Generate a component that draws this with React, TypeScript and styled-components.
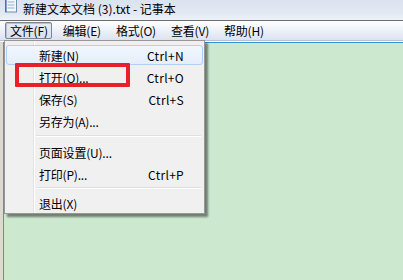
import React from "react";
import { styled, createGlobalStyle } from "styled-components";

const GlobalStyle = createGlobalStyle`
  html, body {
    margin: 0;
    padding: 0;
    overflow: hidden;
  }
  body {
    font-family: "Noto Sans CJK SC", "Noto Sans", sans-serif;
    font-size: 12px;
    color: #000000;
  }
`;

type MenuEntry =
  | { kind: "item"; label: string; shortcut?: string; hot?: boolean }
  | { kind: "sep"; tight?: boolean };

const fileMenu: MenuEntry[] = [
  { kind: "item", label: "新建(N)", shortcut: "Ctrl+N", hot: true },
  { kind: "item", label: "打开(O)...", shortcut: "Ctrl+O" },
  { kind: "item", label: "保存(S)", shortcut: "Ctrl+S" },
  { kind: "item", label: "另存为(A)..." },
  { kind: "sep" },
  { kind: "item", label: "页面设置(U)..." },
  { kind: "item", label: "打印(P)...", shortcut: "Ctrl+P" },
  { kind: "sep", tight: true },
  { kind: "item", label: "退出(X)" },
];

const menuBarItems = ["文件(F)", "编辑(E)", "格式(O)", "查看(V)", "帮助(H)"];

const NotepadIcon = () => (
  <svg width="14" height="14" viewBox="0 0 14 14">
    <rect x="1.5" y="-2" width="11" height="14" fill="#f4f8fc" stroke="#6f8fb0" />
    <line x1="3.5" y1="2" x2="10.5" y2="2" stroke="#8fb0d0" />
    <line x1="3.5" y1="5" x2="10.5" y2="5" stroke="#8fb0d0" />
    <line x1="3.5" y1="8" x2="10.5" y2="8" stroke="#8fb0d0" />
    <rect x="1" y="0" width="1.6" height="12" fill="#3b74b8" />
  </svg>
);

const App = () => {
  return (
    <>
      <GlobalStyle />
      <Window>
        <TitleBar>
          <IconSlot>
            <NotepadIcon />
          </IconSlot>
          <TitleText>新建文本文档 (3).txt - 记事本</TitleText>
        </TitleBar>
        <MenuBar>
          {menuBarItems.map((m, i) => (
            <MenuBarItem key={m} $open={i === 0}>
              {m}
            </MenuBarItem>
          ))}
        </MenuBar>
        <Body>
          <Editor />
        </Body>

        <Dropdown>
          <Gutter />
          {fileMenu.map((e, i) =>
            e.kind === "sep" ? (
              <Separator key={i} $tight={e.tight} />
            ) : (
              <Item key={i} $hot={e.hot}>
                <ItemLabel>{e.label}</ItemLabel>
                <Shortcut>{e.shortcut}</Shortcut>
              </Item>
            )
          )}
        </Dropdown>
        <Callout />
      </Window>
    </>
  );
};
export default App;

const Window = styled.div`
  position: relative;
  width: 403px;
  height: 280px;
  display: flex;
  flex-direction: column;
  overflow: hidden;
  background: #cce8cf;
`;

const TitleBar = styled.div`
  height: 20px;
  display: flex;
  align-items: center;
  background: linear-gradient(#dbe3ef, #e3e9f3 70%, #eef2f8);
  border-bottom: 1px solid #6d6d6d;
`;

const IconSlot = styled.div`
  width: 14px;
  height: 14px;
  margin: -6px 0 0 4px;
  display: flex;
`;

const TitleText = styled.span`
  margin-left: 5px;
  margin-top: -4px;
  font-size: 12px;
  white-space: nowrap;
`;

const MenuBar = styled.div`
  height: 19px;
  display: flex;
  align-items: center;
  padding-left: 5px;
  background: linear-gradient(#ffffff, #f1f4fa 40%, #dbe2f1);
  border-bottom: 1px solid #b7bfd0;
`;

const MenuBarItem = styled.div<{ $open?: boolean }>`
  height: 15px;
  line-height: 15px;
  padding: 0 3px 0 4px;
  margin-right: 6px;
  border: 1px solid ${(p) => (p.$open ? "#7c8595" : "transparent")};
  border-radius: 2px;
  background: ${(p) =>
    p.$open ? "linear-gradient(#e6ebf3, #d9e0ec)" : "transparent"};
  box-shadow: ${(p) => (p.$open ? "inset 1px 1px 0 #b9c0cc" : "none")};
  white-space: nowrap;
  letter-spacing: -0.2px;
`;

const Body = styled.div`
  flex: 1;
  display: flex;
  padding-left: 3px;
  background: #dcd9d1;
  border-top: 1px solid #ffffff;
`;

const Editor = styled.div`
  flex: 1;
  background: #cce8cf;
  border-left: 1px solid #80858f;
  border-top: 1px solid #3b8dd2;
`;

const Dropdown = styled.div`
  position: absolute;
  left: 4px;
  top: 40px;
  width: 197px;
  display: flex;
  flex-direction: column;
  padding: 2px 1px 0 1px;
  background: #f0f0f0;
  border: 1px solid #979797;
  box-shadow: 3px 3px 2px rgba(0, 0, 0, 0.45);
`;

const Gutter = styled.div`
  position: absolute;
  left: 28px;
  top: 0;
  bottom: 0;
  width: 1px;
  background: #e2e3e3;
  border-right: 1px solid #ffffff;
`;

const Item = styled.div<{ $hot?: boolean }>`
  position: relative;
  height: 18px;
  margin-top: 2px;
  display: flex;
  align-items: center;
  justify-content: space-between;
  padding: 0 18px 0 32px;
  border: 1px solid ${(p) => (p.$hot ? "#aecff7" : "transparent")};
  border-radius: 3px;
  background: ${(p) =>
    p.$hot ? "linear-gradient(#f2f7fe, #e4eefb)" : "transparent"};
`;

const ItemLabel = styled.span`
  white-space: nowrap;
  letter-spacing: -0.2px;
`;

const Shortcut = styled.span`
  white-space: nowrap;
  letter-spacing: 0.3px;
`;

const Separator = styled.div<{ $tight?: boolean }>`
  position: relative;
  height: 1px;
  margin: ${(p) => (p.$tight ? "3px 2px 2px 30px" : "4px 2px 3px 30px")};
  background: #e0e0e0;
  border-bottom: 1px solid #ffffff;
`;

const Callout = styled.div`
  position: absolute;
  left: 15px;
  top: 63px;
  width: 107px;
  height: 16px;
  border: 4px solid #e8202a;
  border-radius: 1px;
`;
